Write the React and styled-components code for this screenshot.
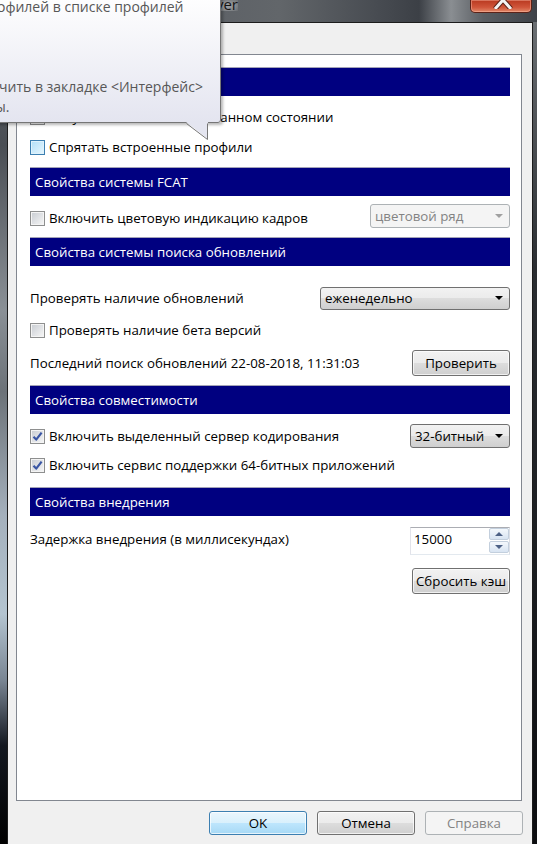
import React from "react";
import styled, { createGlobalStyle } from "styled-components";

const GlobalStyle = createGlobalStyle`
  html, body {
    margin: 0;
    padding: 0;
    background: #000;
  }
  body {
    font-family: "Open Sans", "Noto Sans", sans-serif;
    font-size: 13.3px;
    color: #000;
  }
`;

const Window = styled.div`
  position: relative;
  width: 537px;
  height: 844px;
  overflow: hidden;
  display: flex;
  flex-direction: column;
`;

const TitleBar = styled.div`
  height: 22px;
  flex: none;
  display: flex;
  align-items: flex-start;
  background: linear-gradient(
    90deg,
    #4a4e54 0%,
    #5e6267 40%,
    #62666a 52%,
    #484c52 70%,
    #3c4046 78%,
    #8a8e92 84%,
    #5a5e63 90%,
    #3e4248 100%
  );
`;

const TitleText = styled.div`
  width: 238px;
  display: flex;
  justify-content: flex-end;
  overflow: hidden;
  margin-top: -3px;
  font-size: 15px;
  line-height: 14px;
  color: #151515;
  white-space: nowrap;
  text-shadow: 0 0 6px #e8e8e8, 0 0 8px #e8e8e8;
`;

const CloseButton = styled.div`
  margin-left: auto;
  margin-right: 5px;
  width: 62px;
  height: 13px;
  box-sizing: border-box;
  display: flex;
  justify-content: center;
  overflow: hidden;
  border: 1px solid #5b2218;
  border-top: none;
  border-radius: 0 0 5px 5px;
  background: linear-gradient(#b8381f, #d0553a 60%, #e08868);
  box-shadow: inset 0 0 0 1px rgba(255, 190, 170, 0.45);

  svg {
    margin-top: -9px;
    margin-left: 4px;
  }
`;

const Body = styled.div`
  flex: 1;
  display: flex;
  min-height: 0;
`;

const LeftFrame = styled.div`
  width: 7px;
  flex: none;
  background: linear-gradient(
    180deg,
    #5c6066 0%,
    #4a4e54 15%,
    #8a9096 35%,
    #6c7278 45%,
    #a4b0bc 60%,
    #b4c4d0 72%,
    #7a8694 80%,
    #141820 88%,
    #000 100%
  );
`;

const RightFrame = styled.div`
  width: 4px;
  flex: none;
  background: linear-gradient(180deg, #6a6e72 0%, #2a2d31 30%, #0c0d10 100%);
`;

const Client = styled.div`
  width: 526px;
  box-sizing: border-box;
  flex: none;
  display: flex;
  flex-direction: column;
  border: 1px solid #1c1c1c;
  border-bottom: none;
  background: #f0f0f0;
  padding: 31px 10px 0 8px;
`;

const Panel = styled.div`
  height: 747px;
  box-sizing: border-box;
  flex: none;
  display: flex;
  flex-direction: column;
  border: 1px solid #828790;
  background: #fff;
  padding: 12px 11px 0 13px;
`;

const SectionHeader = styled.div`
  height: 29px;
  box-sizing: border-box;
  flex: none;
  margin-top: ${(p) => p.$mt}px;
  display: flex;
  align-items: center;
  padding-left: 5px;
  border-top: 1px solid #a4a4b8;
  background: #000080;
  color: #fff;
`;

const Row = styled.div`
  height: ${(p) => p.$h}px;
  margin-top: ${(p) => p.$mt || 0}px;
  flex: none;
  display: flex;
  align-items: center;
  white-space: nowrap;
`;

const Box = styled.span`
  width: 15px;
  height: 15px;
  box-sizing: border-box;
  flex: none;
  margin-right: 4px;
  display: flex;
  align-items: center;
  justify-content: center;
  border: 1px solid ${(p) => (p.$hover ? "#3c7fb1" : "#8e8f8f")};
  box-shadow: inset 0 0 0 1px ${(p) => (p.$hover ? "#def2fc" : "#f4f4f4")};
  background: ${(p) =>
    p.$hover
      ? "linear-gradient(135deg, #b1dff8, #e6f6fe)"
      : "linear-gradient(135deg, #c8ccd2, #f7f7f7)"};
`;

const Combo = styled.div`
  width: ${(p) => p.$w}px;
  height: ${(p) => p.$h}px;
  box-sizing: border-box;
  flex: none;
  margin-left: auto;
  align-self: ${(p) => (p.$top ? "flex-start" : "center")};
  display: flex;
  align-items: center;
  justify-content: space-between;
  padding: 0 6px 0 4px;
  border: 1px solid ${(p) => (p.$disabled ? "#adb2b5" : "#707070")};
  border-radius: 3px;
  background: ${(p) =>
    p.$disabled
      ? "#f4f4f4"
      : "linear-gradient(#f2f2f2 0%, #ebebeb 50%, #dddddd 50%, #cfcfcf 100%)"};
  color: ${(p) => (p.$disabled ? "#838383" : "#000")};
`;

const Arrow = styled.span`
  width: 0;
  height: 0;
  border-left: 4px solid transparent;
  border-right: 4px solid transparent;
  border-top: 4px solid ${(p) => (p.$disabled ? "#a0a0a0" : "#000")};
`;

const Button = styled.button`
  width: ${(p) => p.$w}px;
  height: ${(p) => p.$h}px;
  box-sizing: border-box;
  flex: none;
  margin-left: ${(p) => (p.$push ? "auto" : "0")};
  padding: 0;
  font: inherit;
  color: ${(p) => (p.$disabled ? "#838383" : "#000")};
  border: 1px solid
    ${(p) => (p.$primary ? "#3c7fb1" : p.$disabled ? "#adb2b5" : "#707070")};
  border-radius: 3px;
  background: ${(p) =>
    p.$primary
      ? "linear-gradient(#eaf6fd 0%, #d9f0fc 50%, #bee6fd 50%, #a7d9f5 100%)"
      : p.$disabled
      ? "#f4f4f4"
      : "linear-gradient(#f2f2f2 0%, #ebebeb 50%, #dddddd 50%, #cfcfcf 100%)"};
  box-shadow: inset 0 0 0 1px
    ${(p) => (p.$disabled ? "transparent" : "rgba(255,255,255,0.7)")};
`;

const Spin = styled.div`
  width: 100px;
  height: 28px;
  box-sizing: border-box;
  flex: none;
  margin-left: auto;
  align-self: flex-start;
  display: flex;
  border: 1px solid;
  border-color: #abadb3 #dbdfe6 #e3e9ef #e2e3ea;
  background: #fff;
`;

const SpinValue = styled.div`
  flex: 1;
  padding: 2px 0 0 3px;
  line-height: 18px;
`;

const SpinButtons = styled.div`
  width: 20px;
  display: flex;
  flex-direction: column;
  gap: 1px;
  padding: 0 0 1px;
`;

const SpinBtn = styled.div`
  flex: 1;
  display: flex;
  align-items: center;
  justify-content: center;
  border: 1px solid #c3cfdd;
  border-radius: 2px;
  background: linear-gradient(#f4f8fc, #d8e4f2);
`;

const SpinArrow = styled.span`
  width: 0;
  height: 0;
  border-left: 4px solid transparent;
  border-right: 4px solid transparent;
  ${(p) =>
    p.$up ? "border-bottom: 4px solid #4d6185;" : "border-top: 4px solid #4d6185;"}
`;

const Footer = styled.div`
  display: flex;
  justify-content: flex-end;
  gap: 10px;
  margin-top: 10px;
  margin-right: -1px;
`;

const Tooltip = styled.div`
  position: absolute;
  z-index: 5;
  left: -12px;
  top: -8px;
  width: 233px;
  box-sizing: border-box;
  padding: 4px 8px 5px 9px;
  border: 1px solid #767676;
  border-radius: 3px;
  background: linear-gradient(#ffffff, #e4e5f0);
  box-shadow: 2px 2px 3px rgba(0, 0, 0, 0.28);
  color: #575757;
  font-size: 14px;
  white-space: nowrap;

  svg {
    position: absolute;
    left: 197px;
    top: 129px;
  }
`;

const TipLine = styled.div`
  height: 20px;
  line-height: 20px;
  margin-left: ${(p) => p.$indent || 0}px;
`;

const Check = ({ checked, hover }) => (
  <Box $hover={hover}>
    {checked && (
      <svg width="11" height="11" viewBox="0 0 11 11">
        <path
          d="M1.5 5.8 L4.2 8.6 L9.6 1.6"
          fill="none"
          stroke="#3a56a4"
          strokeWidth="2.2"
          strokeLinejoin="round"
        />
      </svg>
    )}
  </Box>
);

export default function App() {
  return (
    <>
      <GlobalStyle />
      <Window>
        <Tooltip>
          <TipLine $indent={-1}>офилей в списке профилей</TipLine>
          <TipLine>&nbsp;</TipLine>
          <TipLine>&nbsp;</TipLine>
          <TipLine>&nbsp;</TipLine>
          <TipLine $indent={1}>чить в закладке &lt;Интерфейс&gt;</TipLine>
          <TipLine $indent={-3}>ы.</TipLine>
          <svg width="23" height="18" viewBox="0 0 23 18">
            <polygon points="0,0 22,0 22,17" fill="#e4e5f0" />
            <path d="M0.5 1.5 L21.5 17.5 L21.5 1.5" fill="none" stroke="#767676" />
          </svg>
        </Tooltip>

        <TitleBar>
          <TitleText>
            <span>Свойства RivaTuner Statistics Server</span>
          </TitleText>
          <CloseButton>
            <svg width="22" height="18" viewBox="0 0 22 18">
              <path
                d="M3 0 L19 18 M19 0 L3 18"
                stroke="#5b2218"
                strokeWidth="5"
              />
              <path
                d="M3 0 L19 18 M19 0 L3 18"
                stroke="#f4f4f4"
                strokeWidth="3"
              />
            </svg>
          </CloseButton>
        </TitleBar>

        <Body>
          <LeftFrame />
          <Client>
            <Panel>
              <SectionHeader $mt={0}>Общие свойства</SectionHeader>
              <Row $h={30} $mt={6}>
                <Check />
                Запускать в минимизированном состоянии
              </Row>
              <Row $h={30}>
                <Check hover />
                Спрятать встроенные профили
              </Row>

              <SectionHeader $mt={5}>Свойства системы FCAT</SectionHeader>
              <Row $h={28} $mt={8}>
                <Check />
                Включить цветовую индикацию кадров
                <Combo $w={140} $h={24} $disabled $top>
                  цветовой ряд
                  <Arrow $disabled />
                </Combo>
              </Row>

              <SectionHeader $mt={5}>
                Свойства системы поиска обновлений
              </SectionHeader>
              <Row $h={24} $mt={20}>
                Проверять наличие обновлений
                <Combo $w={190} $h={23}>
                  еженедельно
                  <Arrow />
                </Combo>
              </Row>
              <Row $h={24} $mt={8}>
                <Check />
                Проверять наличие бета версий
              </Row>
              <Row $h={28} $mt={7}>
                Последний поиск обновлений 22-08-2018, 11:31:03
                <Button $w={98} $h={26} $push>
                  Проверить
                </Button>
              </Row>

              <SectionHeader $mt={8}>Свойства совместимости</SectionHeader>
              <Row $h={26} $mt={9}>
                <Check checked />
                Включить выделенный сервер кодирования
                <Combo $w={100} $h={24}>
                  32-битный
                  <Arrow />
                </Combo>
              </Row>
              <Row $h={24} $mt={4}>
                <Check checked />
                Включить сервис поддержки 64-битных приложений
              </Row>

              <SectionHeader $mt={10}>Свойства внедрения</SectionHeader>
              <Row $h={24} $mt={11}>
                Задержка внедрения (в миллисекундах)
                <Spin>
                  <SpinValue>15000</SpinValue>
                  <SpinButtons>
                    <SpinBtn>
                      <SpinArrow $up />
                    </SpinBtn>
                    <SpinBtn>
                      <SpinArrow />
                    </SpinBtn>
                  </SpinButtons>
                </Spin>
              </Row>
              <Row $h={26} $mt={17}>
                <Button $w={98} $h={26} $push>
                  Сбросить кэш
                </Button>
              </Row>
            </Panel>

            <Footer>
              <Button $w={98} $h={24} $primary>
                OK
              </Button>
              <Button $w={98} $h={24}>
                Отмена
              </Button>
              <Button $w={98} $h={24} $disabled>
                Справка
              </Button>
            </Footer>
          </Client>
          <RightFrame />
        </Body>
      </Window>
    </>
  );
}
